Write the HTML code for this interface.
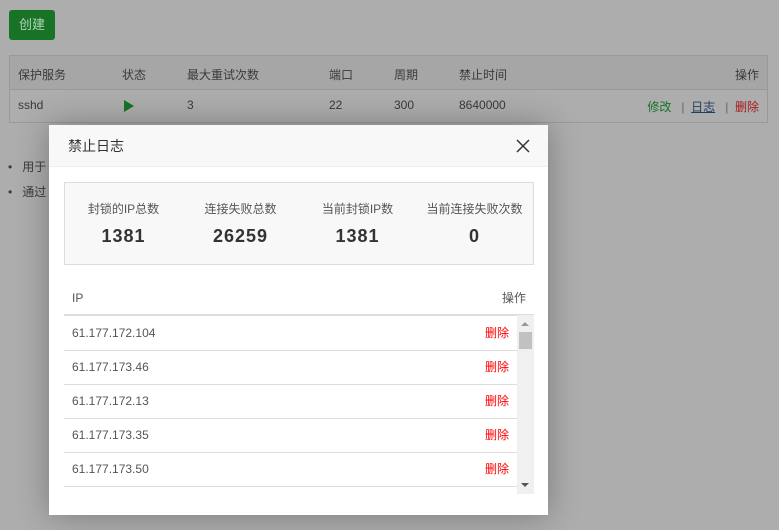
<html><head><style>
body{margin:0;width:779px;height:530px;background:#adadad;font-family:"Liberation Sans","Noto Sans CJK SC",sans-serif;font-size:12px;color:#333;position:relative;overflow:hidden}
.abs{position:absolute}
.btn{left:9px;top:10px;width:46px;height:30px;background:#187327;border-radius:3px;color:#b0d4b5;font-size:13px;line-height:30px;text-align:center}
.tbl{left:9px;top:55px;width:759px;height:68px;border:1px solid #999;box-sizing:border-box}
.tr1{height:33px;border-bottom:1px solid #999;background:#a6a6a6}
.c{position:absolute;font-size:12px;color:#3a3a3a}
.modal{left:49px;top:125px;width:499px;height:390px;background:#fff;box-shadow:0 0 30px rgba(0,0,0,.3)}
.hd{height:41px;background:#f8f8f8;border-bottom:1px solid #eee;font-size:14px;color:#333;line-height:42px;padding-left:19px}
.stats{left:15px;top:57px;width:470px;height:83px;background:#f8f8f8;border:1px solid #ddd;box-sizing:border-box}
.st{position:absolute;top:0;width:117px;text-align:center}
.st .l{font-size:12px;color:#555;margin-top:17px}
.st .v{font-size:18px;font-weight:bold;color:#333;margin-top:9px;letter-spacing:1px}
.row{position:absolute;left:15px;width:453px;height:34px;border-bottom:1px solid #ddd;line-height:34px;font-size:12px;color:#555}
.row span{position:absolute;left:8px}
.row b{position:absolute;right:8px;font-weight:normal;color:#f00}
</style></head><body>
<div class="abs btn">创建</div>
<div class="abs tbl">
<div class="tr1"></div>
<div class="c" style="left:8px;top:10px">保护服务</div><div class="c" style="left:112px;top:10px">状态</div><div class="c" style="left:177px;top:10px">最大重试次数</div><div class="c" style="left:319px;top:10px">端口</div><div class="c" style="left:384px;top:10px">周期</div><div class="c" style="left:449px;top:10px">禁止时间</div><div class="c" style="right:8px;top:10px">操作</div>
<div class="c" style="left:8px;top:42px">sshd</div>
<div class="c" style="left:114px;top:44px;width:0;height:0;border-left:10px solid #187327;border-top:6px solid transparent;border-bottom:6px solid transparent"></div>
<div class="c" style="left:177px;top:42px">3</div><div class="c" style="left:319px;top:42px">22</div><div class="c" style="left:384px;top:42px">300</div><div class="c" style="left:449px;top:42px">8640000</div>
<div class="c" style="right:8px;top:42px"><span style="color:#187327">修改</span><span style="color:#666">&nbsp;&nbsp;&nbsp;|&nbsp;&nbsp;</span><span style="color:#1f3f5f;text-decoration:underline">日志</span><span style="color:#666">&nbsp;&nbsp;&nbsp;|&nbsp;&nbsp;</span><span style="color:#a81a1a">删除</span></div>
</div>
<div class="c" style="left:8px;top:158px">•&nbsp;&nbsp;&nbsp;用于</div>
<div class="c" style="left:8px;top:183px">•&nbsp;&nbsp;&nbsp;通过</div>
<div class="abs modal">
<div class="hd">禁止日志</div>
<svg class="abs" style="left:467px;top:14px" width="14" height="14"><path d="M1 1L13 13M13 1L1 13" stroke="#333" stroke-width="1.5"/></svg>
<div class="abs stats">
<div class="st" style="left:0"><div class="l">封锁的IP总数</div><div class="v">1381</div></div>
<div class="st" style="left:117px"><div class="l">连接失败总数</div><div class="v">26259</div></div>
<div class="st" style="left:234px"><div class="l">当前封锁IP数</div><div class="v">1381</div></div>
<div class="st" style="left:351px"><div class="l">当前连接失败次数</div><div class="v">0</div></div>
</div>
<div class="abs" style="left:15px;top:158px;width:470px;height:31px;border-bottom:2px solid #ddd;line-height:31px;color:#555"><span style="position:absolute;left:8px">IP</span><span style="position:absolute;right:8px">操作</span></div>
<div class="row" style="top:191px"><span>61.177.172.104</span><b>删除</b></div>
<div class="row" style="top:225px"><span>61.177.173.46</span><b>删除</b></div>
<div class="row" style="top:259px"><span>61.177.172.13</span><b>删除</b></div>
<div class="row" style="top:293px"><span>61.177.173.35</span><b>删除</b></div>
<div class="row" style="top:327px"><span>61.177.173.50</span><b>删除</b></div>
<div class="abs" style="left:468px;top:190px;width:17px;height:179px;background:#f0f0f0">
<div class="abs" style="left:4px;top:7px;border-bottom:4px solid #999;border-left:4px solid transparent;border-right:4px solid transparent"></div>
<div class="abs" style="left:2px;top:17px;width:13px;height:17px;background:#c1c1c1"></div>
<div class="abs" style="left:4px;bottom:7px;border-top:4px solid #555;border-left:4px solid transparent;border-right:4px solid transparent"></div>
</div>
</div>
</body></html>
